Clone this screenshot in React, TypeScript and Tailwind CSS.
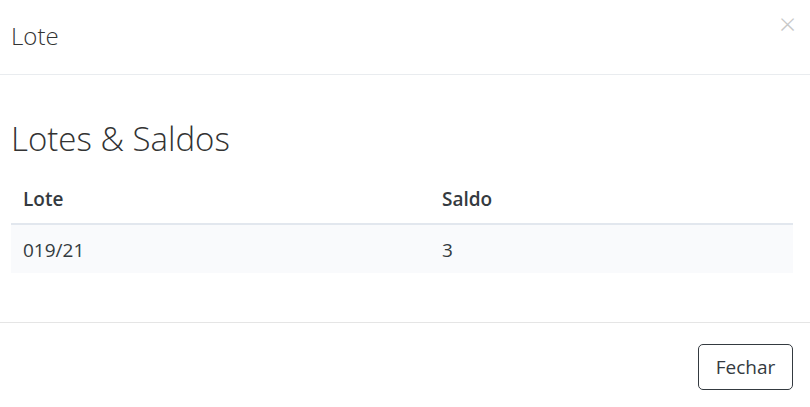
export default function App() {
  return (
    <div
      className="flex h-[407px] w-[810px] flex-col bg-white text-[#212529]"
      style={{ fontFamily: '"Open Sans", sans-serif' }}
    >
      <div className="relative flex h-[75px] items-center border-b border-[#e9ecef] px-[11px] pb-[3px]">
        <h5 className="text-[24px] font-light text-[#333]">Lote</h5>
        <button
          type="button"
          className="absolute right-[14px] top-[9px] text-[30px] leading-none font-light text-[#c8c8c8]"
        >
          ×
        </button>
      </div>

      <div className="h-[248px] border-b border-[#e5e5e5] px-[11px] pt-[44px]">
        <h2 className="text-[33px] leading-[40px] font-light text-[#333]">Lotes &amp; Saldos</h2>
        <table className="mt-[16px] w-[782px] text-[19px]">
          <thead>
            <tr className="border-b-2 border-[#e2e7ee]">
              <th className="h-[49px] px-3 pt-[1px] text-left font-semibold text-[#343a40]">Lote</th>
              <th className="h-[49px] w-[363px] px-3 pt-[1px] text-left font-semibold text-[#343a40]">Saldo</th>
            </tr>
          </thead>
          <tbody>
            <tr className="bg-[#f9fafc]">
              <td className="h-[49px] px-3 pt-[2px] text-[#343a40]">019/21</td>
              <td className="h-[49px] px-3 pt-[2px] text-[#343a40]">3</td>
            </tr>
          </tbody>
        </table>
      </div>

      <div className="flex justify-end px-[17px] pt-[21px]">
        <button
          type="button"
          className="h-[46px] w-[95px] rounded-[5px] border border-[#343a40] text-[19px] text-[#343a40]"
        >
          Fechar
        </button>
      </div>
    </div>
  );
}
